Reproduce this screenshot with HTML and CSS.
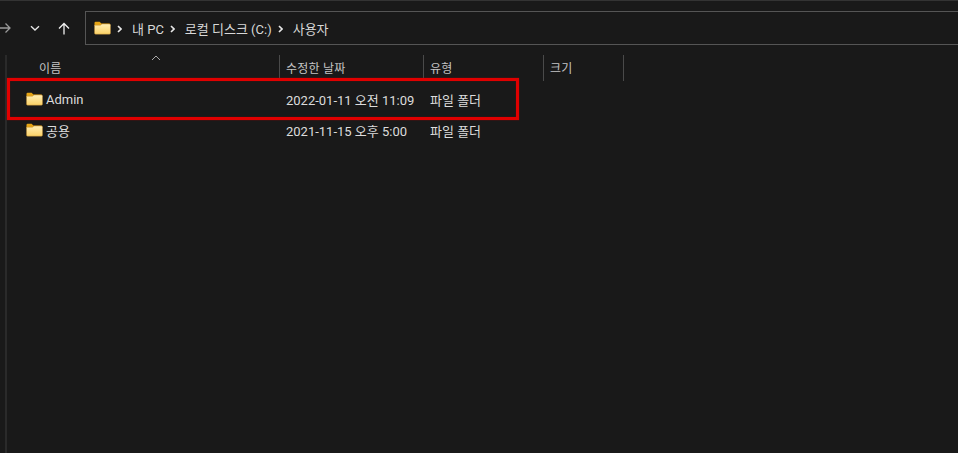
FILE: index.html
```html
<!doctype html>
<html lang="ko">
  <head>
    <meta charset="UTF-8" />
    <title>사용자</title>
    <link rel="stylesheet" href="styles.css">
  </head>
  <body>
    <div class="toolbar">
      <div class="nav">
        <svg class="nav-forward" width="13" height="12" viewBox="0 0 13 12"><path d="M1 6H12M7.5 1.5L12 6L7.5 10.5" /></svg>
        <svg class="nav-down" width="10" height="7" viewBox="0 0 10 7"><path d="M1 1.2L5 5L9 1.2" /></svg>
        <svg class="nav-up" width="12" height="13" viewBox="0 0 12 13"><path d="M6 12.5V1.5M1 6.5L6 1.5L11 6.5" /></svg>
      </div>
      <div class="address">
        <svg class="folder" width="17" height="14" viewBox="0 0 17 14"><use href="#folder-icon" /></svg>
        <svg class="crumb-sep" width="5" height="8" viewBox="0 0 5 8"><path d="M1 1L4 4L1 7" /></svg>
        <span class="crumb">내 PC</span>
        <svg class="crumb-sep" width="5" height="8" viewBox="0 0 5 8"><path d="M1 1L4 4L1 7" /></svg>
        <span class="crumb">로컬 디스크 (C:)</span>
        <svg class="crumb-sep" width="5" height="8" viewBox="0 0 5 8"><path d="M1 1L4 4L1 7" /></svg>
        <span class="crumb">사용자</span>
      </div>
    </div>

    <div class="list">
      <div class="list-head">
        <div class="col col-name">이름<svg class="sort" width="10" height="6" viewBox="0 0 10 6"><path d="M1 5L5 1L9 5" /></svg></div>
        <div class="col col-date">수정한 날짜</div>
        <div class="col col-type">유형</div>
        <div class="col col-size">크기</div>
      </div>

      <div class="row row-first">
        <div class="cell-name"><svg class="folder" width="17" height="14" viewBox="0 0 17 14"><use href="#folder-icon" /></svg>Admin</div>
        <div class="cell-date">2022-01-11 오전 11:09</div>
        <div class="cell-type">파일 폴더</div>
        <div class="highlight"></div>
      </div>
      <div class="row">
        <div class="cell-name"><svg class="folder" width="17" height="14" viewBox="0 0 17 14"><use href="#folder-icon" /></svg>공용</div>
        <div class="cell-date">2021-11-15 오후 5:00</div>
        <div class="cell-type">파일 폴더</div>
      </div>
    </div>

    <svg class="defs" width="0" height="0">
      <defs>
        <linearGradient id="folder-front" x1="0" y1="0" x2="0" y2="1">
          <stop offset="0" stop-color="#ffeeb4" />
          <stop offset="1" stop-color="#fbd166" />
        </linearGradient>
        <g id="folder-icon">
          <path d="M0.5 2A1.2 1.2 0 0 1 1.7 0.8H5.6L7.4 2.6H15A1.3 1.3 0 0 1 16.3 3.9V5H0.5Z" fill="#e5a414" />
          <path d="M0.5 4.2H6.4L8 3H15.3A1.2 1.2 0 0 1 16.5 4.2V12A1.2 1.2 0 0 1 15.3 13.2H1.7A1.2 1.2 0 0 1 0.5 12Z" fill="url(#folder-front)" stroke="#b9832a" stroke-width="0.4" />
        </g>
      </defs>
    </svg>
  </body>
</html>
```

FILE: styles.css
```css
:root {
  --bg: #191919;
  --text: #dcdcdc;
  --head-text: #c4c4c4;
  --line: #555555;
}

* {
  box-sizing: border-box;
  margin: 0;
  padding: 0;
}

html,
body {
  height: 100%;
}

body {
  width: 958px;
  height: 453px;
  overflow: hidden;
  background-color: var(--bg);
  border-top: 1px solid #333333;
  font-family: Roboto, "Noto Sans CJK KR", sans-serif;
  font-size: 13px;
  color: var(--text);
  display: flex;
  flex-direction: column;
}

.toolbar {
  display: flex;
  align-items: center;
  height: 34px;
  margin-top: 10px;
}

.nav {
  width: 85px;
  flex-shrink: 0;
  display: flex;
  align-items: center;
}

.nav svg {
  fill: none;
  stroke-width: 1.3;
}

.nav-forward {
  stroke: #9a9a9a;
  stroke-width: 1.5;
  margin-left: -2px;
}

.nav-down {
  stroke: #e8e8e8;
  margin-left: 19px;
}

.nav-up {
  stroke: #f0f0f0;
  margin-left: 18px;
}

.address {
  flex-grow: 1;
  height: 34px;
  border: 1px solid var(--line);
  border-right: none;
  display: flex;
  align-items: center;
  padding-left: 8px;
}

.crumb {
  color: #d8d8d8;
  padding-top: 1px;
}

.crumb-sep {
  fill: none;
  stroke: #e8e8e8;
  stroke-width: 1.6;
  margin: 1px 10px 0 6px;
  flex-shrink: 0;
}

.list {
  flex-grow: 1;
  margin-left: 5px;
  border-left: 2px solid #2a2a2a;
  margin-top: 10px;
}

.list-head {
  display: flex;
  height: 26px;
}

.col {
  position: relative;
  color: var(--head-text);
  font-size: 12px;
  letter-spacing: 0.2px;
  padding: 4px 0 0 6px;
  border-right: 1px solid #4a4a4a;
}

.col-name {
  width: 273px;
  padding-left: 32px;
}

.sort {
  position: absolute;
  left: 144px;
  top: 0;
  fill: none;
  stroke: #a8a8a8;
}

.col-date {
  width: 144px;
}

.col-type {
  width: 120px;
}

.col-size {
  width: 80px;
}

.row {
  position: relative;
  display: flex;
  align-items: center;
  height: 31px;
  padding-top: 1px;
}

.row-first {
  margin-top: 2px;
}

.cell-name {
  width: 273px;
  padding-left: 19px;
  display: flex;
  align-items: center;
  gap: 3px;
}

.cell-date {
  width: 144px;
  padding-left: 6px;
  white-space: nowrap;
}

.cell-type {
  padding-left: 6px;
}

/* red annotation box drawn over the first row */
.highlight {
  position: absolute;
  left: 0;
  top: -5px;
  width: 512px;
  height: 42px;
  border: 3px solid #e00000;
  box-shadow: 0 0 1px #b00000, inset 0 0 1px #b00000;
}

.defs {
  position: absolute;
}
```
